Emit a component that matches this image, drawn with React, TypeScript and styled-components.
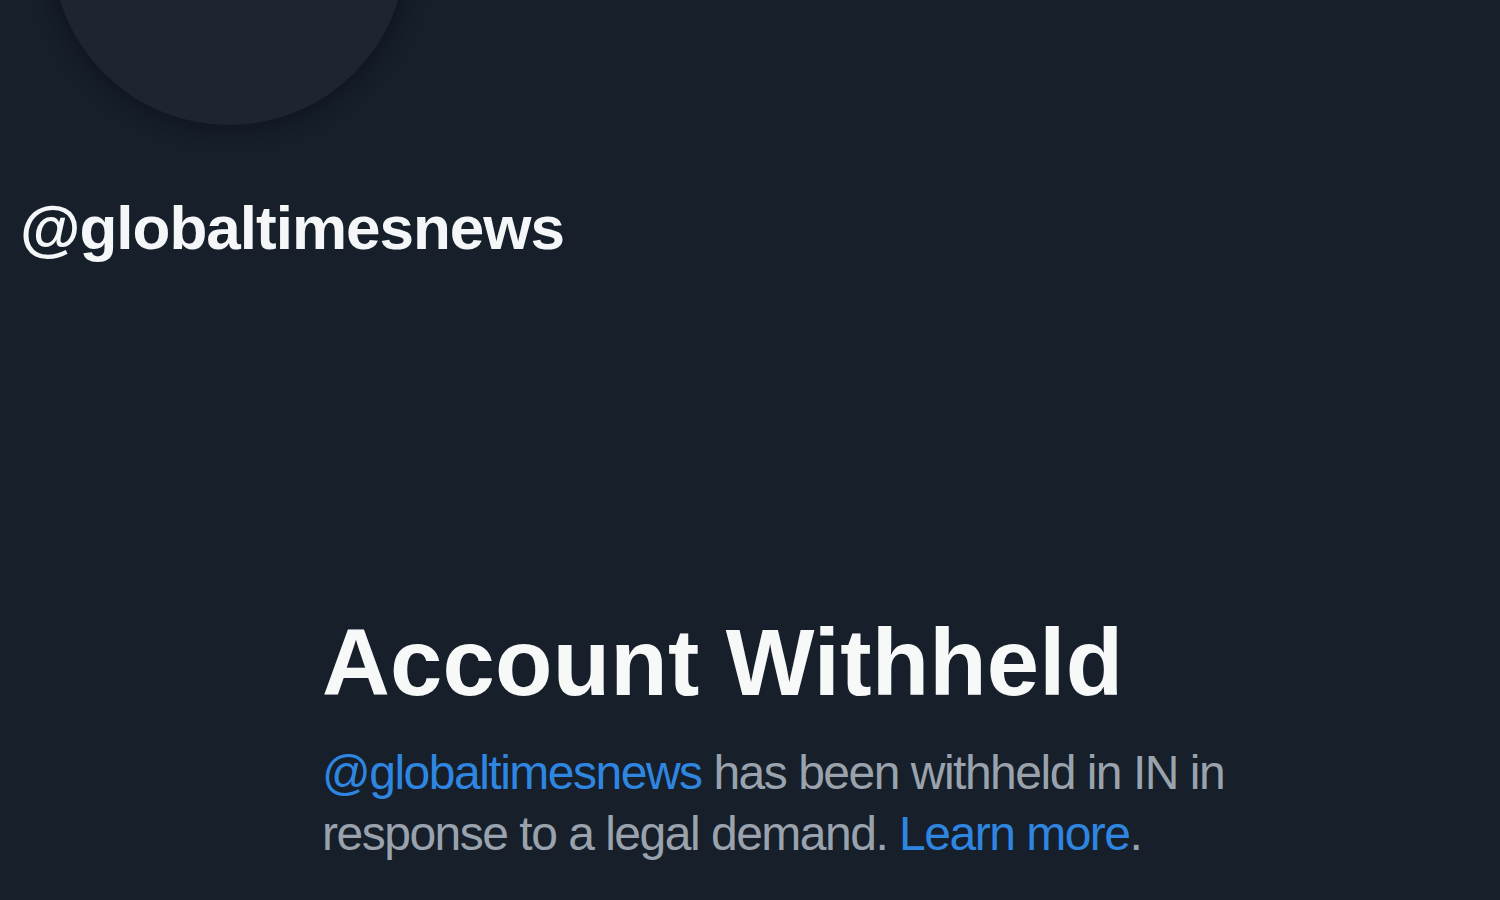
import React from "react";
import styled, { createGlobalStyle } from "styled-components";

const Global = createGlobalStyle`
  html, body { margin: 0; padding: 0; background: #161f2a; }
  * { box-sizing: border-box; }
`;

const Page = styled.div`
  width: 1500px;
  height: 900px;
  overflow: hidden;
  background: #161f2a;
  font-family: "Liberation Sans", Arial, sans-serif;
  display: flex;
  flex-direction: column;
`;

const Avatar = styled.div`
  width: 354px;
  height: 354px;
  border-radius: 50%;
  margin-top: -229px;
  margin-left: 52px;
  background: #1e2430;
  box-shadow: 0 0 18px 6px rgba(10, 14, 22, 0.45);
  flex: none;
`;

const Handle = styled.div`
  margin-top: 67px;
  margin-left: 20px;
  font-size: 62px;
  font-weight: 700;
  letter-spacing: -1px;
  line-height: 72px;
  color: #f4f6f8;
`;

const Notice = styled.section`
  margin-top: 347px;
  margin-left: 322px;
  width: 940px;
  display: flex;
  flex-direction: column;
  gap: 27px;
`;

const Title = styled.h1`
  margin: 0;
  font-size: 94px;
  font-weight: 700;
  line-height: 104px;
  letter-spacing: 0.2px;
  color: #f7f9f9;
`;

const Body = styled.p`
  margin: 0;
  font-size: 48px;
  line-height: 61px;
  letter-spacing: -1.5px;
  color: #9aa3ad;
`;

const Link = styled.a`
  color: #2f86e0;
  text-decoration: none;
`;

export default function App() {
  return (
    <>
      <Global />
      <Page>
        <Avatar />
        <Handle>@globaltimesnews</Handle>
        <Notice>
          <Title>Account Withheld</Title>
          <Body>
            <Link href="#">@globaltimesnews</Link> has been withheld in IN in
            response to a legal demand. <Link href="#">Learn more</Link>.
          </Body>
        </Notice>
      </Page>
    </>
  );
}
